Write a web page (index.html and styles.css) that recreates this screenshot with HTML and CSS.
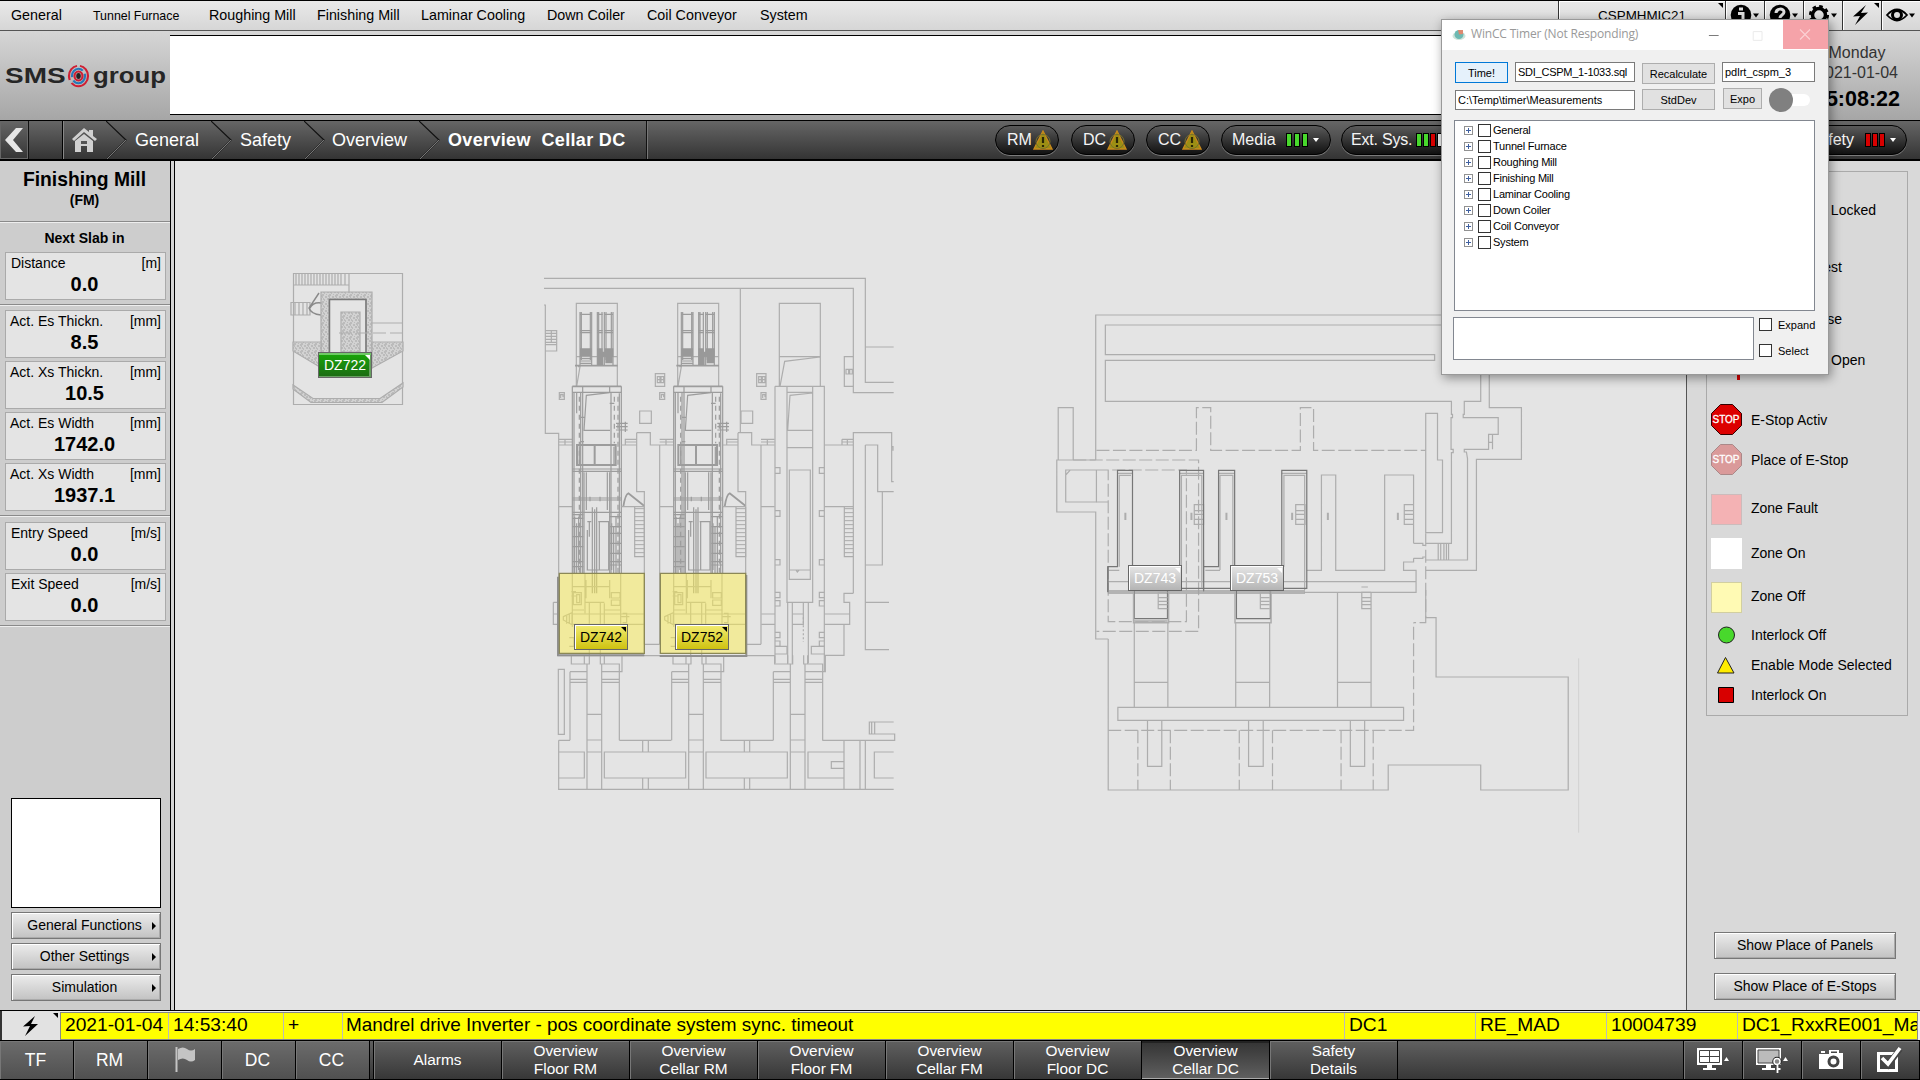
FILE: index.html
```html
<!DOCTYPE html>
<html lang="en">
<head>
<meta charset="utf-8">
<title>Overview Cellar DC</title>
<link rel="stylesheet" href="styles.css">
</head>
<body>
<div class="screen">
  <header class="menubar">
    <nav class="menu">
      <span>General</span><span class="small">Tunnel Furnace</span><span>Roughing Mill</span><span>Finishing Mill</span><span>Laminar Cooling</span><span>Down Coiler</span><span>Coil Conveyor</span><span>System</span>
    </nav>
    <div class="tools">
      <div class="tool host">CSPMHMIC21<i class="corner"></i></div>
      <div class="tool"><svg width="38" height="29" viewBox="0 0 38 29"><circle cx="15" cy="14" r="10.300"/><path d="M13 8h4M12 12.500h5v8M11.500 20h7.500" stroke="#ddd" stroke-width="3" fill="none"/><path d="M27 12.500h6l-3 4z"/></svg></div>
      <div class="tool"><svg width="38" height="29" viewBox="0 0 38 29"><circle cx="15" cy="14" r="10.300"/><path d="M11 12c0-5 8-5 8-1 0 3-4 3-4 6M15 19v3" stroke="#ddd" stroke-width="3" fill="none"/><path d="M27 12.500h6l-3 4z"/></svg></div>
      <div class="tool"><svg width="38" height="29" viewBox="0 0 38 29"><circle cx="15" cy="14" r="6.500" fill="none" stroke="#000" stroke-width="3.500"/><circle cx="15" cy="14" r="8.800" fill="none" stroke="#000" stroke-width="2.500" stroke-dasharray="3.600 3.300"/><path d="M27 12.500h6l-3 4z"/></svg></div>
      <div class="tool"><svg width="38" height="29" viewBox="0 0 38 29"><path d="M23 4 L10 15.500 L17 15 L12 24 L25 11.500 L18 12z"/></svg><i class="corner"></i></div>
      <div class="tool"><svg width="38" height="29" viewBox="0 0 38 29"><path d="M5 14q10-11 20 0q-10 11-20 0z" fill="none" stroke="#000" stroke-width="1.800"/><circle cx="15" cy="14" r="4.500" fill="none" stroke="#000" stroke-width="3"/><path d="M27 12.500h6l-3 4z"/></svg></div>
    </div>
  </header>

  <section class="banner">
    <div class="logo"><span class="sms">SMS</span>
      <svg width="23" height="24" viewBox="0 0 23 28" preserveAspectRatio="none"><g fill="none" stroke-width="2.200"><ellipse cx="11.500" cy="14" rx="9.500" ry="12" stroke="#cf1f33" stroke-dasharray="25 4 20 3"/><ellipse cx="11.500" cy="14" rx="6.500" ry="8.500" stroke="#2878b8" stroke-dasharray="18 4"/><ellipse cx="11.500" cy="14" rx="4" ry="5.300" stroke="#cf1f33"/></g><ellipse cx="11.500" cy="14" rx="2.300" ry="3.500" fill="#222"/></svg>
      <span class="grp">group</span></div>
    <div class="message"></div>
    <div class="clock"><span>Monday</span><span>2021-01-04</span><b>15:08:22</b></div>
  </section>

  <nav class="crumbs">
    <div class="back"><svg width="28" height="38" viewBox="0 0 28 38"><path d="M16 7h7L13 19l10 12h-7L5 19z" fill="#e6e6e6"/></svg></div>
    <div class="spacer"></div>
    <div class="home"><svg width="44" height="38" viewBox="0 0 44 38"><path d="M9 18L21 7l5 4V9h4v6l4 3-2 2-11-9-10 9z" fill="#d0d0d0"/><path d="M12 20l9-7 9 7v11h-6v-6h-6v6h-6z" fill="#d0d0d0"/><path d="M18 20h6v3h-6z" fill="#555"/></svg></div>
    <svg class="chev" width="21" height="38" viewBox="0 0 21 38"><path d="M0 0L20 19L1 38" fill="none" stroke="#111" stroke-width="1.200"/><path d="M1 38L20 19" fill="none" stroke="#777"/></svg>
    <span class="crumb c1">General</span>
    <svg class="chev" width="21" height="38" viewBox="0 0 21 38"><path d="M0 0L20 19L1 38" fill="none" stroke="#111" stroke-width="1.200"/><path d="M1 38L20 19" fill="none" stroke="#777"/></svg>
    <span class="crumb c2">Safety</span>
    <svg class="chev" width="21" height="38" viewBox="0 0 21 38"><path d="M0 0L20 19L1 38" fill="none" stroke="#111" stroke-width="1.200"/><path d="M1 38L20 19" fill="none" stroke="#777"/></svg>
    <span class="crumb c3">Overview</span>
    <svg class="chev" width="21" height="38" viewBox="0 0 21 38"><path d="M0 0L20 19L1 38" fill="none" stroke="#111" stroke-width="1.200"/><path d="M1 38L20 19" fill="none" stroke="#777"/></svg>
    <span class="crumb current">Overview&nbsp; Cellar DC</span>
    <div class="pills">
      <div class="pill">RM<svg width="20" height="20" viewBox="0 0 20 20"><path d="M10 1L19 19H1z" fill="#9c8f14" stroke="#c98a1c" stroke-width="1.300"/><circle cx="10" cy="11.500" r="7" fill="none" stroke="#77702a"/><path d="M10 7v6M10 15v2" stroke="#2a2606" stroke-width="2.200"/></svg></div>
      <div class="pill dc">DC<svg width="20" height="20" viewBox="0 0 20 20"><path d="M10 1L19 19H1z" fill="#9c8f14" stroke="#c98a1c" stroke-width="1.300"/><circle cx="10" cy="11.500" r="7" fill="none" stroke="#77702a"/><path d="M10 7v6M10 15v2" stroke="#2a2606" stroke-width="2.200"/></svg></div>
      <div class="pill">CC<svg width="20" height="20" viewBox="0 0 20 20"><path d="M10 1L19 19H1z" fill="#9c8f14" stroke="#c98a1c" stroke-width="1.300"/><circle cx="10" cy="11.500" r="7" fill="none" stroke="#77702a"/><path d="M10 7v6M10 15v2" stroke="#2a2606" stroke-width="2.200"/></svg></div>
      <div class="pill media">Media<span class="bars"><i class="g"></i><i class="g"></i><i class="g"></i></span><em></em></div>
      <div class="pill ext">Ext. Sys.<span class="bars tight"><i class="g"></i><i class="g"></i><i class="r"></i><i class="w"></i></span></div>
      <div class="pill safety">Safety<span class="bars"><i class="r"></i><i class="r"></i><i class="r"></i></span><em></em></div>
    </div>
  </nav>

  <main class="main">
    <aside class="side">
      <div class="unit"><b>Finishing Mill</b><small>(FM)</small></div>
      <div class="next">Next Slab in</div>
      <div class="group">
        <div class="val i2"><p><span>Distance</span><span>[m]</span></p><b>0.0</b></div>
      </div>
      <div class="group g2">
        <div class="val"><p><span>Act. Es Thickn.</span><span>[mm]</span></p><b>8.5</b></div>
        <div class="val"><p><span>Act. Xs Thickn.</span><span>[mm]</span></p><b>10.5</b></div>
        <div class="val"><p><span>Act. Es Width</span><span>[mm]</span></p><b>1742.0</b></div>
        <div class="val"><p><span>Act. Xs Width</span><span>[mm]</span></p><b>1937.1</b></div>
      </div>
      <div class="group g3">
        <div class="val i2"><p><span>Entry Speed</span><span>[m/s]</span></p><b>0.0</b></div>
        <div class="val i2"><p><span>Exit Speed</span><span>[m/s]</span></p><b>0.0</b></div>
      </div>
      <div class="bottom">
        <div class="blank"></div>
        <div class="btn">General Functions<i></i></div>
        <div class="btn">Other Settings<i></i></div>
        <div class="btn">Simulation<i></i></div>
      </div>
    </aside>
    <div class="rail"></div>

    <section class="stage">
      <svg class="plan" width="1511" height="849" viewBox="175 161 1511 849">
        <defs>
          <pattern id="speckle" width="7" height="7" patternUnits="userSpaceOnUse"><rect width="7" height="7" fill="#d2d2d2"/><path d="M0 1h2M4 0h1M3 3h2M6 2h1M1 5h1M5 5h2M2 6h1M0 3h1" stroke="#a4a4a4"/></pattern>
          <pattern id="ladder" width="6" height="12" patternUnits="userSpaceOnUse"><path d="M0 2H6" stroke="#aaa" stroke-width="3"/></pattern>
          <g id="press">
            <path d="M139 379V130H262V379M139 290H262M150 320L140 379M144 320h8"/>
            <g class="mach">
            <path d="M150 156V315M154 156V300M181 156V300M185 156V315M202 156V315M206 156V300M216 156V300M223 156V315M228 156V300M244 156V300M249 156V315"/>
            <path d="M150 163H185M150 212H185M150 218H185M202 163H218M223 163H249M202 212H218M202 218H218M223 212H249M223 218H249M150 296H185M150 303H185M150 310H185"/>
            <path d="M150 265h35v24h-35zM202 265h16v10h-16zM224 265h26v10h-26zM202 275h48v15h-48zM202 290h18v26h-18zM226 290h22v20h-22z" fill="#999" stroke="none"/>
            <path d="M135 317H263M127 379H274" stroke-width="1.800"/>
            <path d="M158 379V397M239 379V397M127 397H274"/>
            <path d="M127 379V940M274 379V940M132 397V940M152 397V940M158 397V940M243 397V940M268 400V940M140 397V460"/>
            <path d="M148 410V940M253 410V550M264 410V940" stroke-dasharray="5 4"/>
            <path d="M239 398L169 406L162 511H240M152 472h12M152 545h10M239 430h14"/>
            <path d="M141 555H257V615H141zM194 555V615" stroke-width="2"/>
            <path d="M148 560V612M252 560V612M127 627H274M127 634H274M162 637V940M169 637V750M232 637V750M239 637V940"/>
            <path d="M127 714H274M127 720H274M127 757H274M127 764H160M239 770H274M180 710v14M210 710v14"/>
            <path d="M127 775H160M127 800H160M127 830H160M127 860H160M127 905H160M127 920H160M240 800H274M240 820H274M240 850H274M240 880H274M240 905H274M240 915H274"/>
            <path d="M134 770V940M140 790V940M146 770V930M245 790V930M251 800V940M258 770V940"/>
            <path d="M187 742V1000M194 748V1000M200 742V1000"/>
            <path d="M172 810V930M172 785H184M205 785H236V830M170 930H236V825M178 785V830M208 785V930"/>
            <path d="M258 490H293M258 500H293M258 510H293M286 485V516"/>
            <path d="M280 740Q286 702 295 700L343 738" stroke-width="1.800"/>
            </g>
            <path d="M274 740H343M314 740V890H343V740"/>
            <path d="M320 518V695H343V1153M320 518H361V555H430M389 555V1153M343 1153H389M286 555V538H320M286 546H320M389 538H430M389 546H430M408 538V555M389 740H430M274 555H320"/>
            <path d="M376 341h28v38h-28zM389 398h15v20h-15zM394 402v12M394 404h7v8M382 350h8v18h-8zM393 350h8v18h-8zM382 359h19M329 453h35v37h-35z"/>
            <path d="M314 742h29v148h-29z" fill="url(#ladder)" stroke="none"/>
            <path d="M127 980H240M168 960V1015M239 960V1015M124 995h14M124 1008h14M130 998h24v36h-24zM140 1004v24h9v-24zM244 998h26v16h-26zM244 1020h26v16h-26zM166 1027H223M178 1027V1186M211 1027V1186M128 1050H162M128 1062H343M100 1070l26-12v36l-26-14zM110 1065v26M118 1062v30M128 1093H343M223 1050H274M278 1060h12v28h-12M274 1070h24M223 1030V1110M118 1133h14v26h-14M127 940V1100M165 940V1060M272 940V1100"/>
          </g>
          <g id="leg">
            <path d="M124 378V402H171M120 425H171M120 448H171M120 457H171M120 425V631M171 402V778M215 402V778M215 402H268V631M215 425H276V378M215 448H268M215 457H268M171 553H215M171 630H215M171 666H215M163 376V402H178V376M211 376V402H223V376"/>
          </g>
        </defs>

        <g class="ln">
          <path d="M293.500 273.500H402.500V404.500H293.500zM293.500 285H349V292M349 273V285M291 302.500H310V315H291zM372 323H402.500"/>
          <path d="M296 274v11M299 274v11M302 274v11M305 274v11M308 274v11M311 274v11M314 274v11M317 274v11M320 274v11M323 274v11M326 274v11M329 274v11M332 274v11M335 274v11M338 274v11M341 274v11M345 274v11M295 303v12M299 303v12M303 303v12M307 303v12"/>
          <path d="M319 293L309 308Q311 314 321 315M321 303Q313 302 310 308" stroke="#8a8a8a" stroke-width="1.500"/>
          <path d="M321 292h51v76h-51zM329 299v60h37v-60z" fill="url(#speckle)" fill-rule="evenodd"/>
          <path d="M341 312h19v40h-19zM293 342h28v24h-3l-25-15zM372 342h31v9l-31 17z" fill="url(#speckle)"/>
          <path d="M329.500 354V299.500H366V354" stroke="#777" stroke-width="1.500"/>
          <path d="M339 333H402" stroke-dasharray="13 4"/>
          <path d="M293 389L311 402.500H382L403 387V383L380 398.500H313L293 385z" fill="url(#speckle)"/>
        </g>

        <g class="ln" transform="translate(530 260) scale(.333333)">
          <path d="M42 55H1006V367H1091M1006 261H1091M42 85H970V398H1091M631 85V518"/>
          <path d="M42 135H46V273H80V212H46M46 220H80M46 229H80M46 238H80M46 247H80M46 254H80M64 212V247M46 273V520H86V1188M86 538H127M86 546H127M105 538V555M86 555H127M86 740H127M88 398h15v20h-15zM92 402v12M92 404h7v8"/>
          <use href="#press"/><use href="#press" x="304"/>
          <path d="M748 379V130H871V379M748 290H871M871 291L764 304L750 379"/>
          <path d="M970 290H943V379H970M948 328h8v14h-8zM959 328h8v14h-8z"/>
          <path d="M735 379H883V1235M735 379V1210M771 379V1027H848V379M771 397H848M848 399L780 406L773 510M771 511H848M771 563H848M778 958V630H841V958zM778 930H841M798 930l4 6 5-6"/>
          <path d="M735 623h15v17h-15M735 752h15v17h-15M883 623h-15v17h15M883 752h-15v17h15M735 899h15v16h-15M883 899h-15v16h15M735 997h15v16h-15M883 997h-15v16h15M735 1022h15v16h-15M883 1022h-15v16h15M735 1117h15v16h-15M883 1117h-15v16h15M735 1143h15v16h-15M883 1143h-15v16h15"/>
          <path d="M883 555H970M883 740H970M970 1000V518H1085V665H1091M1085 560h4v12M936 538H970M936 538V555M936 546H970M952 538V555M1006 555H1043V695H1091M1006 555V1169H1077M1057 695V915H1006M943 740V890H970M1006 1027H1077"/>
          <path d="M943 742h27v148h-27z" fill="url(#ladder)" stroke="none"/>
        </g>

        <g class="ln" transform="translate(530 530) scale(.333333)">
          <path d="M83 377H735M70 217H86M70 217V283H86M70 252H86M694 252H735M694 283H735M787 217V400M835 217V400M773 217V400M820 217V252M787 252H820M787 283H820V252M883 252H959V217H942V190H970M883 283H959V252M942 283V376H883M735 349H771V372H735M883 349H844V372H883"/>
          <path d="M820 262V335" stroke-dasharray="2 2"/>
          <use href="#leg"/><use href="#leg" x="305"/><use href="#leg" x="610"/>
          <path d="M85 418h18v195h-18zM86 631H120M268 631H424M571 631H730M877 631H1094V612H1018V576H1091M1025 576V612M1034 576V612M86 631V778H1091M86 666H163V744H86M223 666H467V744H223zM528 666H772V744H528zM942 666H834V744H942M942 631V778M990 631V778M1006 631V778M942 695H904V715H942M1091 666H1033V744H1091M338 631V666M355 631V666M338 744V778M355 744V778M643 631V666M659 631V666M643 744V778M659 744V778"/>
          <path d="M84 140V376H343M389 378H649V135" stroke="#8f8f8f" stroke-width="2"/>
          <path d="M88 130H343V370H88zM391 130H647V370H391z" fill="#fff04e" fill-opacity=".48" stroke="#8b8856" stroke-width="1.300"/>
        </g>

        <g class="ln" transform="translate(1040 290) scale(.357143 .333333)">
          <path d="M1125 75H156V510M1125 105H183V194H1105V211H183V334H1152V373h3v10h-4V478h6v10h-5V760H1080M1234 250V334H1188V373h-3v10H1283V433H1256V478H1188v8h6l3 20V810H1080M1258 250V353H1348V508H1222V841H1080M1080 728H1127V510H1113V370H1080V730M1267 433V478M1256 457h11M51 510V353H93V510M156 510H47V666H156V1047H191M156 540H72V636H158V540M72 555l12-14"/>
          <path class="dash" d="M158 481H438V353H478V481H729V353H766V481H1080M93 510H444V1024H158M156 540H410V995H191V540M158 636H191M1080 730V998H1046"/>
          <path d="M747 841H788V555H828V841H965V555H1046V760M191 875H1053M1046 760H1072v6h8M1046 805H1072v-4h8M1046 805V816H1018V841H1053V907H740M1020 644h26v59h-26zM1020 662h26M1020 673h26M1020 688h26M716 644h26v59h-26zM716 662h26M716 673h26M716 688h26M432 644h26v59h-26zM432 662h26M432 673h26M432 688h26M1115 760V810M1122 760V810M1131 760V810M1138 760V810M1144 760V810M900 891h18"/>
          <path d="M239 668v22M424 668v22M522 668v22M706 668v22M806 668v22M1002 668v22" stroke-width="2"/>
          <path d="M222 830V556H255M396 830V556H453V893M504 840V556H540V830M683 830V556H741V900M191 841H222M463 841H504M217 550H259M391 550H458M500 550H545M677 550H747"/>
          <path d="M190 905V830H217V541H259V830M391 830V541H458V905M458 830H500V541H545V830M677 830V541H747V895H397" stroke="#777" stroke-width="1.200"/>
        </g>

        <g class="ln" transform="translate(1040 540) scale(.357143 .333333)">
          <path d="M190 153H742M190 159H742" stroke="#a2a2a2" stroke-width="1.500"/>
          <path d="M264 152V236H357V152M550 152V236H645V152M190 80V157M458 60V152" stroke="#777" stroke-width="1.200"/>
          <path d="M262 152V248H360V152M546 152V248H647V152M264 243H357" stroke-width="1.500"/>
          <path d="M264 247V502M358 247V502M264 427H358M548 247V502M643 247V502M548 427H643M833 157V502M927 157V502M833 427H927M218 502H1018V541H218zM301 541V679H341V541M584 541V679H625V541M869 541V679H909V541M1080 150V233H1109V411H1479V750H1234V675H975V750H191V297"/>
          <path class="dash" d="M191 571H1046V248M274 571V750M365 571V750M558 571V750M651 571V750M843 571V750M933 571V750"/>
          <path d="M357 157H331V206H357M331 173h26M331 184h26M331 194h26M643 157H617V206H643M617 173h26M617 184h26M617 194h26M927 157H901V206H927M901 173h26M901 184h26M901 194h26"/>
          <path d="M1508 355V878" stroke="#d4d4d4"/>
        </g>
      </svg>
      <div class="zone green z722">DZ722<i></i></div>
      <div class="zone yellow z742">DZ742<i></i></div>
      <div class="zone yellow z752">DZ752<i></i></div>
      <div class="zone grey z743">DZ743<i></i></div>
      <div class="zone grey z753">DZ753<i></i></div>
    </section>

    <aside class="right">
      <div class="legend">
        <div class="row r1"><span class="lbl end wide">Locked</span></div>
        <div class="row r2"><span class="lbl end">est</span></div>
        <div class="row r3"><span class="lbl end">se</span></div>
        <div class="row r4"><svg width="31" height="40" viewBox="0 0 31 40"><path d="M27.500 0V40" stroke="#d80000" stroke-width="3"/></svg><span class="lbl open">Open</span></div>
        <div class="row r5"><svg width="31" height="31" viewBox="0 0 31 31"><path d="M9.500.5h12l9 9v12l-9 9h-12l-9-9v-12z" fill="#dc0000" stroke="#300"/><text x="15" y="19" class="stop">STOP</text></svg><span class="lbl">E-Stop Activ</span></div>
        <div class="row r6"><svg width="31" height="31" viewBox="0 0 31 31"><path d="M9.500.5h12l9 9v12l-9 9h-12l-9-9v-12z" fill="#da9a9a" stroke="#a88"/><text x="15" y="19" class="stop">STOP</text></svg><span class="lbl">Place of E-Stop</span></div>
        <div class="row r7"><i class="sw fault"></i><span class="lbl">Zone Fault</span></div>
        <div class="row r8"><i class="sw on"></i><span class="lbl">Zone On</span></div>
        <div class="row r9"><i class="sw off"></i><span class="lbl">Zone Off</span></div>
        <div class="row r10"><svg width="31" height="18" viewBox="0 0 31 18"><circle cx="15.500" cy="9" r="8" fill="#48d82c" stroke="#222"/></svg><span class="lbl">Interlock Off</span></div>
        <div class="row r11"><svg width="31" height="18" viewBox="0 0 31 18"><path d="M14.500 1.500L23 17H6.500z" fill="#ffec00" stroke="#222"/></svg><span class="lbl">Enable Mode Selected</span></div>
        <div class="row r12"><svg width="31" height="18" viewBox="0 0 31 18"><path d="M7.500 1.500h15v15h-15z" fill="#d80000" stroke="#000"/></svg><span class="lbl">Interlock On</span></div>
      </div>
      <div class="acts"><div class="btn">Show Place of Panels</div><div class="btn">Show Place of E-Stops</div></div>
    </aside>
  </main>

  <section class="alarm">
    <div class="bolt"><svg width="56" height="27" viewBox="0 0 56 27"><path d="M31 4L19 14.500L26 14L21 24L34 12L27 12z"/></svg><i class="corner"></i></div>
    <div class="cells">
      <span>2021-01-04</span><span>14:53:40</span><span>+</span><span class="msg">Mandrel drive Inverter - pos coordinate system sync. timeout</span><span>DC1</span><span>RE_MAD</span><span>10004739</span><span>DC1_RxxRE001_Ma</span>
    </div>
  </section>

  <footer class="tabs">
    <div class="area">TF</div><div class="area">RM</div>
    <div class="area"><svg width="24" height="28" viewBox="0 0 24 28"><path d="M4.500 1V26" stroke="#c4c4c4" stroke-width="2"/><path d="M6 3q5-3 9 0t8 0v11q-4 3-8 0t-9 0z" fill="#c4c4c4"/></svg></div>
    <div class="area">DC</div><div class="area">CC</div>
    <div class="gap"></div>
    <div class="tab">Alarms</div><div class="tab">Overview<br>Floor RM</div><div class="tab">Overview<br>Cellar RM</div><div class="tab">Overview<br>Floor FM</div><div class="tab">Overview<br>Cellar FM</div><div class="tab">Overview<br>Floor DC</div><div class="tab active">Overview<br>Cellar DC</div><div class="tab">Safety<br>Details</div>
    <div class="fill"></div>
    <div class="ico"><svg width="58" height="38" viewBox="0 0 58 38"><path d="M13 7h25v17H13z" fill="#fff"/><path d="M15.500 9.500h20v12h-20zM25.500 9.500v12M15.500 15.500h20" fill="none" stroke="#444"/><path d="M23 24h5v3h4v2H19v-2h4zM40 20h5l-2.500-4z" fill="#fff"/></svg></div>
    <div class="ico"><svg width="58" height="38" viewBox="0 0 58 38"><path d="M13 7h25v17H13z" fill="#fff"/><path d="M15 9h21v13H15z" fill="#bbb" stroke="#444"/><path d="M23 24h5v3h4v2H19v-2h4zM40 20h5l-2.500-4z" fill="#fff"/><circle cx="34" cy="20.500" r="3" fill="#bbb" stroke="#222" stroke-width="3.500"/><circle cx="34" cy="20.500" r="3" fill="#888" stroke="#fff" stroke-width="1.500"/><path d="M34.500 24V32M34.500 28h3" stroke="#fff" stroke-width="1.800"/></svg></div>
    <div class="ico"><svg width="58" height="38" viewBox="0 0 58 38"><path d="M17 13h10V9h10v3h4v16H17zM19 10h4v2h-4z" fill="#fff"/><path d="M29 10.500h6v1.500h-6z" fill="#444"/><circle cx="31.500" cy="20.500" r="4.500" fill="#fff" stroke="#444" stroke-width="3"/></svg></div>
    <div class="ico"><svg width="58" height="38" viewBox="0 0 58 38"><path d="M17.500 12.500h18v17h-18z" fill="none" stroke="#fff" stroke-width="3"/><path d="M21 18l6 6L39 8" fill="none" stroke="#444" stroke-width="6"/><path d="M21 17l6 6L39 7" fill="none" stroke="#fff" stroke-width="3.600"/></svg></div>
  </footer>

  <div class="dialog">
    <div class="title">
      <svg width="14" height="12" viewBox="0 0 14 12"><ellipse cx="7" cy="7" rx="6.500" ry="4" fill="#cfe3da"/><circle cx="7" cy="5.500" r="4.500" fill="#6db9b2"/><path d="M7 5.500L6 1h5v4z" fill="#dd8a70"/></svg>
      <span>WinCC Timer (Not Responding)</span>
      <svg width="80" height="27" viewBox="0 0 80 27"><path d="M4 13.500h10" stroke="#777"/><path d="M49.500 9.500h9v9h-9z" fill="none" stroke="#e9e9e9"/></svg>
      <div class="close"><svg width="45" height="29" viewBox="0 0 45 29"><path d="M17 9.500l10 10M27 9.500l-10 10" stroke="#fbd0d4" stroke-width="1.100"/></svg></div>
    </div>
    <div class="form">
      <div class="frow">
        <span class="wb focus">Time!</span><span class="inp w120">SDI_CSPM_1-1033.sql</span><span class="wb w73 dn">Recalculate</span><span class="inp w93">pdlrt_cspm_3</span>
      </div>
      <div class="frow two">
        <span class="inp w180">C:\Temp\timer\Measurements</span><span class="wb w73">StdDev</span><span class="wb expo">Expo</span><span class="toggle"></span>
      </div>
      <div class="tree">
        <div><i class="pm"></i><i class="cb"></i>General</div><div><i class="pm"></i><i class="cb"></i>Tunnel Furnace</div><div><i class="pm"></i><i class="cb"></i>Roughing Mill</div><div><i class="pm"></i><i class="cb"></i>Finishing Mill</div><div><i class="pm"></i><i class="cb"></i>Laminar Cooling</div><div><i class="pm"></i><i class="cb"></i>Down Coiler</div><div><i class="pm"></i><i class="cb"></i>Coil Conveyor</div><div><i class="pm"></i><i class="cb"></i>System</div>
      </div>
      <div class="foot"><div class="box"></div><div class="checks"><div><i class="cb"></i>Expand</div><div><i class="cb"></i>Select</div></div></div>
    </div>
  </div>
</div>
</body>
</html>
```

FILE: styles.css
```css
* { box-sizing: border-box; }
body { margin: 0; background: #e4e4e4; font-family: "Liberation Sans", Arial, sans-serif; font-size: 14px; color: #000; }
svg { display: block; flex: none; }
.screen { position: relative; width: 1920px; height: 1080px; overflow: hidden; display: flex; flex-direction: column; }

/* menu bar */
.menubar { height: 31px; flex: none; display: flex; justify-content: space-between; border-top: 1px solid #000; border-bottom: 1px solid #555; background: linear-gradient(#e9e9e9, #d6d6d6); }
.menu { display: grid; grid-template-columns: 82px 116px 108px 104px 126px 100px 113px 80px; padding-left: 11px; line-height: 29px; font-size: 14.300px; white-space: nowrap; }
.menu .small { font-size: 12.400px; padding-top: 1px; }
.tools { display: flex; }
.tool { position: relative; width: 39px; height: 29px; border-left: 1px solid #333; box-shadow: inset 1px 1px #fff; }
.tool.host { width: 167px; text-align: center; font-size: 13.400px; line-height: 29px; }
.corner { position: absolute; right: 2px; top: 2px; border-top: 5px solid #000; border-left: 5px solid transparent; }

/* banner */
.banner { height: 89px; flex: none; display: flex; background: linear-gradient(#d6d6d6, #a6a6a6); }
.logo { width: 170px; padding: 0 0 0 5px; display: flex; align-items: center; gap: 3px; font-size: 22px; font-weight: bold; color: #262626; }
.sms { width: 59px; transform: scaleX(1.27); transform-origin: left; }
.grp { width: 72px; transform: scaleX(1.17); transform-origin: left; }
.message { width: 1560px; height: 80px; margin-top: 4px; background: #fff; border-top: 1px solid #000; border-bottom: 1px solid #000; }
.clock { flex: 1; display: flex; flex-direction: column; align-items: center; padding: 12px 0 0 64px; font-size: 16px; line-height: 20px; color: #333; }
.clock b { font-size: 21.500px; line-height: 33px; color: #000; }

/* breadcrumb bar */
.crumbs { height: 41px; flex: none; display: flex; align-items: center; border-top: 1px solid #000; border-bottom: 2px solid #000; background: linear-gradient(#666, #343434); color: #fff; font-size: 18px; white-space: nowrap; }
.back { width: 29px; height: 38px; border-right: 1px solid #111; box-shadow: inset 0 0 0 1px #666; }
.spacer { width: 33px; height: 38px; }
.home { width: 44px; height: 38px; border-left: 1px solid #000; box-shadow: inset 1px 0 #888; }
.crumb { line-height: 38px; padding-left: 8px; }
.c1 { width: 84px; } .c2 { width: 72px; } .c3 { width: 94px; padding-left: 7px; }
.current { width: 207px; border-right: 1px solid #111; box-shadow: 1px 0 #777; font-weight: bold; letter-spacing: .34px; }
.pills { display: flex; margin-left: 348px; gap: 11px; font-size: 16px; color: #f4f4f4; }
.pill { width: 64px; height: 30px; padding-left: 11px; display: flex; align-items: center; border: 1px solid #000; border-radius: 15px; background: linear-gradient(#5a5a5a, #111); box-shadow: 0 1px #7b7b7b; }
.pill svg { margin-left: 1px; }
.pill.dc { margin-left: 1px; }
.pill.media { width: 110px; padding-left: 10px; }
.pill.ext { width: 130px; margin-left: -1px; padding-left: 9px; letter-spacing: -.2px; }
.pill.safety { width: 126px; margin-left: 299px; padding-left: 0; justify-content: flex-end; padding-right: 10px; margin-right: 12px; }
.bars { display: flex; gap: 2px; margin-left: 10px; }
.bars.tight { gap: 1px; margin-left: 4px; }
.bars i { width: 6px; height: 14px; border: 1px solid #000; }
.safety .bars { margin-left: 11px; gap: 1px; }
.g { background: #48d82c; } .r { background: #d80000; } .w { background: #eee; }
.pill em { margin-left: 5px; border-top: 4px solid #fff; border-left: 3.500px solid transparent; border-right: 3.500px solid transparent; }

/* main area */
.main { flex: none; height: 849px; display: flex; }
.side { width: 170px; display: flex; flex-direction: column; background: #cdcdcd; }
.unit { height: 61px; padding-top: 7px; padding-right: 1px; text-align: center; display: flex; flex-direction: column; border-bottom: 1px solid #8a8a8a; box-shadow: 0 1px #eee; }
.unit b { font-size: 19.300px; line-height: 24px; }
.unit small { font-size: 14px; font-weight: bold; line-height: 17px; }
.next { height: 30px; padding-top: 2px; padding-right: 1px; font-size: 14px; font-weight: bold; line-height: 29px; text-align: center; }
.group { display: flex; flex-direction: column; gap: 3px; padding: 0 4px 4px 5px; border-bottom: 1px solid #8a8a8a; box-shadow: 0 1px #eee; }
.g2 { padding-top: 5px; } .g3 { padding-top: 6px; }
.val { height: 48px; border: 1px solid #aaa; background: #e4e4e4; text-align: center; }
.val p { margin: 0; padding: 2px 4px 0 4px; display: flex; justify-content: space-between; line-height: 17px; }
.val.i2 p { padding-left: 5px; }
.val b { font-size: 20px; line-height: 24px; display: block; padding-right: 2px; }
.bottom { margin-top: auto; padding: 0 9px 9px 11px; display: flex; flex-direction: column; gap: 4px; }
.blank { height: 110px; background: #fff; border: 1px solid #000; }
.btn { position: relative; height: 27px; line-height: 24px; text-align: center; border: 1px solid #777; background: linear-gradient(#ececec, #c2c2c2); box-shadow: inset 1px 1px #fff, inset -1px -1px #aaa; }
.bottom .btn { padding-right: 3px; }
.btn i { position: absolute; right: 4px; top: 9px; border-left: 4px solid #000; border-top: 4px solid transparent; border-bottom: 4px solid transparent; }
.rail { width: 5px; border-left: 1px solid #000; border-right: 1px solid #000; background: #d4d4d4; }
.stage { position: relative; width: 1511px; background: #e4e4e4; }
.ln { fill: none; stroke: #adadad; stroke-width: 1.200px; }
.mach { stroke: #9c9c9c; }
.plan path { vector-effect: non-scaling-stroke; }
.dash { stroke-dasharray: 13 3.500; }
.zone { position: absolute; width: 54px; height: 26px; line-height: 24px; text-align: center; border: 1px solid #666; }
.zone i { position: absolute; right: 1px; top: 2px; border-top: 5px solid #000; border-left: 5px solid transparent; }
.green { color: #fff; background: linear-gradient(#18a808, #1c6a14); box-shadow: inset 0 2px #6fca66, inset -2px -1px #67a060; }
.green i { border-top-color: #fff; }
.yellow { background: linear-gradient(#f3ec72, #cfc210); box-shadow: inset 1px 1px #fff; }
.grey { color: #fff; background: linear-gradient(#e6e6e6, #b4b4b4); box-shadow: inset 1px 1px #fff; }
.grey i { border-top-color: #fff; }
.z722 { left: 143px; top: 191px; }
.z742 { left: 399px; top: 463px; }
.z752 { left: 500px; top: 463px; }
.z743 { left: 953px; top: 404px; }
.z753 { left: 1055px; top: 404px; }

/* legend */
.right { width: 234px; padding: 10px 12px 10px 19px; display: flex; flex-direction: column; justify-content: space-between; background: #d9d9d9; border-left: 1px solid #555; }
.legend { height: 545px; padding: 23px 0 0 4px; border: 1px solid #aaa; }
.row { display: flex; align-items: center; }
.row > svg, .sw { width: 31px; flex: none; }
.lbl { margin-left: 9px; line-height: 16px; white-space: nowrap; }
.lbl.open { margin-left: 89px; }
.lbl.end { margin-left: auto; margin-right: 65px; }
.lbl.end.wide { margin-right: 31px; }
.r1 { height: 30px; } .r2 { height: 30px; margin-top: 27px; } .r3 { height: 30px; margin-top: 22px; }
.r4 { height: 40px; margin-top: 6px; }
.r5 { height: 31px; margin-top: 24px; } .r6 { height: 31px; margin-top: 9px; }
.r7 { margin-top: 19px; } .r8 { margin-top: 13px; } .r9 { margin-top: 13px; }
.r10 { margin-top: 13px; } .r11 { margin-top: 12px; } .r12 { margin-top: 12px; }
.r7 .lbl, .r9 .lbl { margin-top: -3px; }
.r8 .lbl { margin-top: -2px; }
.sw { height: 31px; border: 1px solid #cbb; }
.fault { background: #f4b2b4; } .on { background: #fff; border-color: #fff; } .off { background: #fffab4; border-color: #d2cfa0; }
.stop { font-size: 10px; fill: #fff; text-anchor: middle; stroke: #fff; stroke-width: .3px; }
.acts { display: flex; flex-direction: column; gap: 14px; padding: 0 12px 0 8px; }

/* alarm line */
.alarm { height: 30px; flex: none; display: flex; border-top: 1px solid #000; background: #eee; }
.bolt { position: relative; width: 60px; padding: 1px 0 0 2px; border-left: 2px solid #333; background: #e2e2e2; }
.cells { width: 1858px; height: 28px; margin-top: 1px; display: grid; grid-template-columns: 108px 115px 59px 1002px 131px 131px 131px 180px; border: 1px solid #888; background: #ff0; overflow: hidden; font-size: 19.200px; line-height: 24px; white-space: nowrap; }
.cells span { padding-left: 4px; border-right: 1px solid #bbb; overflow: hidden; }
.cells .msg { font-size: 18.950px; padding-left: 3px; }

/* bottom tabs */
.tabs { height: 40px; flex: none; display: flex; border-top: 1px solid #000; border-bottom: 1px solid #000; background: linear-gradient(#606060, #373737); color: #fff; }
.area, .tab, .ico { flex: none; display: flex; align-items: center; justify-content: center; text-align: center; border-right: 1px solid #000; box-shadow: inset 1px 1px #777; }
.area { width: 74px; padding-right: 2px; font-size: 17.500px; background: linear-gradient(#6c6c6c, #505050); }
.gap { width: 4px; flex: none; border-right: 1px solid #000; }
.tab { width: 128px; font-size: 15.400px; line-height: 18px; }
.tab.active { background: linear-gradient(#333, #606060); box-shadow: inset 0 -1px #aaa, inset 0 2px #222; }
.fill { flex: 1; border-right: 1px solid #000; }
.ico { width: 59px; justify-content: flex-start; }

/* floating timer window */
.dialog { position: absolute; left: 1441px; top: 19px; width: 388px; height: 356px; border: 1px solid #999; background: #f0f0f0; box-shadow: 2px 3px 10px rgba(0,0,0,.4); font-size: 11px; }
.title { height: 30px; padding-left: 10px; display: flex; align-items: center; background: #fff; color: #999; font: 12px/28px "Open Sans", "Noto Sans", sans-serif; letter-spacing: -.17px; }
.title span { width: 234px; margin-left: 5px; height: 30px; }
.title > svg:nth-of-type(2) { width: 78px; }
.close { height: 29px; width: 45px; margin-bottom: 1px; background: #f5a3a9; }
.form { padding: 12px 12px 0; display: flex; flex-direction: column; }
.frow { display: flex; align-items: flex-start; gap: 7px; height: 26px; padding-left: 1px; white-space: nowrap; }
.wb { height: 21px; line-height: 20px; text-align: center; background: #e1e1e1; border: 1px solid #adadad; }
.wb.focus { width: 53px; border-color: #0078d7; background: #e5f1fb; }
.dn { margin-top: 1px; }
.inp { height: 20px; line-height: 18px; padding-left: 2px; border: 1px solid #7a7a7a; background: #fff; overflow: hidden; }
.w120 { width: 120px; letter-spacing: -.25px; } .w73 { width: 73px; } .w93 { width: 93px; } .w180 { width: 180px; }
.frow.two { height: 32px; align-items: flex-start; padding-top: 1px; }
.frow.two .inp { margin-top: 1px; }
.expo { width: 39px; margin-left: 1px; margin-top: -1px; }
.toggle { position: relative; width: 29px; height: 12px; margin: 5px 0 0 12px; border-radius: 6px; background: #fff; }
.toggle::before { content: ""; position: absolute; left: -12px; top: -6px; width: 24px; height: 24px; border-radius: 50%; background: #808080; }
.tree { height: 191px; width: 361px; padding: 1px 0 0 9px; background: #fff; border: 1px solid #828790; letter-spacing: -.22px; }
.tree div { height: 16px; display: flex; align-items: center; }
.pm { width: 9px; height: 9px; margin-right: 5px; border: 1px solid #919191; background: linear-gradient(#4060a0, #4060a0) center/5px 1px no-repeat, linear-gradient(#4060a0, #4060a0) center/1px 5px no-repeat, #fff; }
.cb { width: 13px; height: 13px; margin-right: 2px; border: 1px solid #333; background: #fff; }
.foot { display: flex; margin: 6px 0 0 -1px; }
.box { width: 301px; height: 43px; border: 1px solid #828790; background: #fff; }
.checks { margin-left: 5px; padding-top: 1px; display: flex; flex-direction: column; gap: 13px; }
.checks div { display: flex; align-items: center; height: 13px; }
.checks .cb { margin-right: 6px; }
```
